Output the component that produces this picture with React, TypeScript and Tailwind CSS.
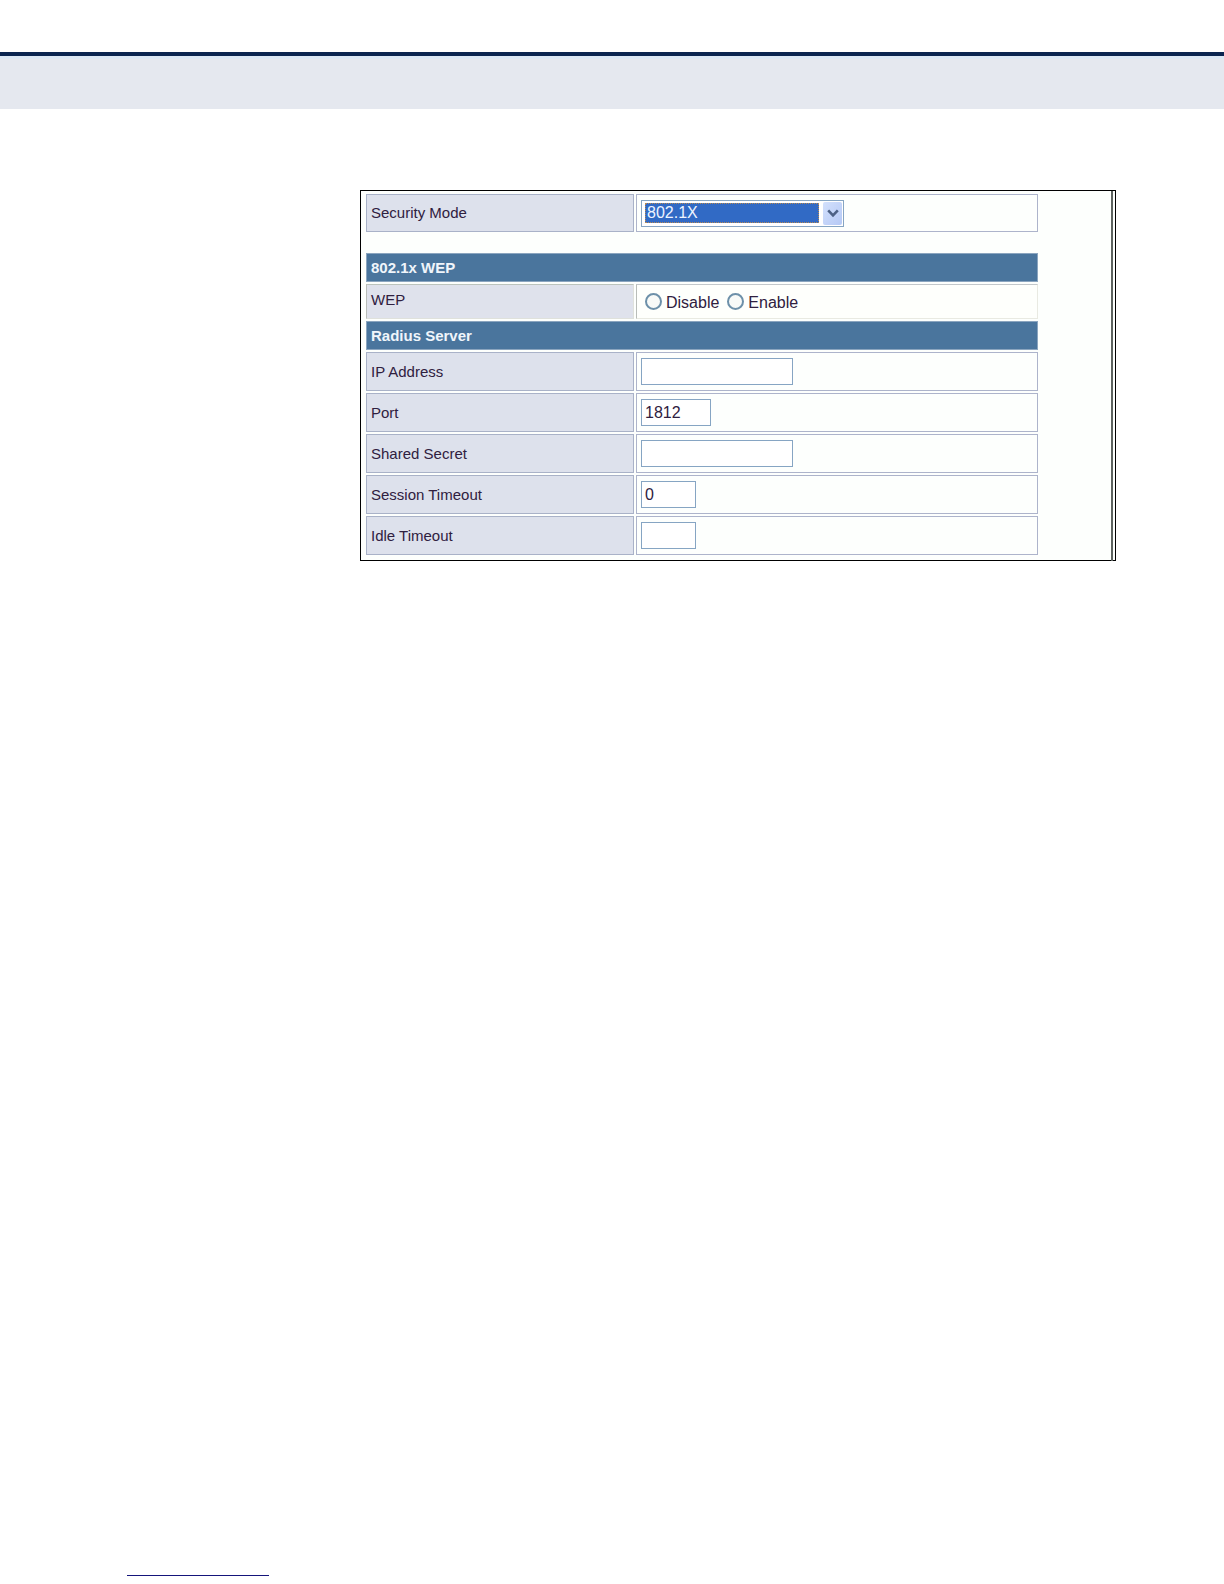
import { useState } from "react";
import type { ReactNode } from "react";

const labelCell =
  "border border-[#a9b2c8] bg-[#dde1ec] pl-1 text-left align-middle font-normal";
const valueCell = "border border-[#adb4cb] bg-[#fdfffd] pl-1 align-middle";
const textInput =
  "block h-[27px] border border-[#86a5c3] bg-white px-[3px] text-[16px] leading-5 outline-none";

function HeadingRow({ children }: { children: ReactNode }) {
  return (
    <tr className="h-[29px]">
      <th
        colSpan={2}
        scope="colgroup"
        className="border border-[#8ba5bf] bg-[#4a759d] pl-1 text-left align-middle font-bold text-[#f0f5fb]"
      >
        {children}
      </th>
    </tr>
  );
}

type FieldProps = {
  id: string;
  label: string;
  width: string;
  initial?: string;
  type?: string;
};

function FieldRow({ id, label, width, initial = "", type = "text" }: FieldProps) {
  const [value, setValue] = useState(initial);
  return (
    <tr className="h-[39px]">
      <th scope="row" className={labelCell}>
        <label htmlFor={id}>{label}</label>
      </th>
      <td className={valueCell}>
        <input
          id={id}
          type={type}
          value={value}
          onChange={(e) => setValue(e.target.value)}
          className={`${textInput} ${width}`}
        />
      </td>
    </tr>
  );
}

function WepOption({ id, label }: { id: string; label: string }) {
  return (
    <span className="flex items-center gap-1">
      <input
        id={id}
        type="radio"
        name="wep"
        className="size-[17px] appearance-none rounded-full border-2 border-[#6d90a9] bg-[#f8faf8] checked:bg-[#3fa535]"
      />
      <label htmlFor={id} className="pt-0.5 text-[16px]">
        {label}
      </label>
    </span>
  );
}

export default function App() {
  const [mode, setMode] = useState("802.1X");
  return (
    <div className="flex min-h-screen flex-col bg-white font-['Liberation_Sans',Arial,sans-serif] text-[15px] leading-5 text-[#2f2040]">
      <header className="mt-13 border-t-4 border-[#0a2550] bg-[#e5e8ef]">
        <div className="h-[3px] bg-[#dce8f5]" />
        <div className="h-[50px]" />
      </header>

      <main className="mt-[81px] mr-[108px] ml-[360px] border border-black bg-[#fdfffd] pr-0.5">
        <div className="-mb-px border-r-2 border-[#5d6360] pt-px pr-[71px] pb-1 pl-[3px]">
          <table className="w-full table-fixed border-separate border-spacing-0.5">
            <colgroup>
              <col className="w-[40%]" />
              <col />
            </colgroup>
            <tbody>
              <tr className="h-[38px]">
                <th scope="row" className={labelCell}>
                  <label htmlFor="security-mode">Security Mode</label>
                </th>
                <td className={valueCell}>
                  <div className="flex h-[27px] w-[203px] items-center gap-1 border border-[#86a5c3] bg-white pr-px pl-[3px]">
                    <select
                      id="security-mode"
                      value={mode}
                      onChange={(e) => setMode(e.target.value)}
                      className="h-5 min-w-0 flex-1 appearance-none border border-dotted border-[#b58a55] bg-[#316ac5] pl-px text-[16px] leading-[18px] text-[#eef4ff] outline-none"
                    >
                      <option>802.1X</option>
                    </select>
                    <span className="pointer-events-none flex h-[23px] w-[19px] items-center justify-center rounded-xs bg-linear-to-br from-[#d3e0fc] to-[#b5c9f5]">
                      <svg
                        width="12"
                        height="9"
                        viewBox="0 0 12 9"
                        fill="none"
                        stroke="#4d6185"
                        strokeWidth="2.6"
                        aria-hidden="true"
                      >
                        <path d="M1.2 1.3 6 6.3 10.8 1.3" />
                      </svg>
                    </span>
                  </div>
                </td>
              </tr>
              <tr className="h-[17px]">
                <td colSpan={2} />
              </tr>
              <HeadingRow>802.1x WEP</HeadingRow>
              <tr className="h-[35px]">
                <th
                  scope="row"
                  className="border border-[#dfe1dc] border-t-[#bcc4bd] border-l-[#b9bdb9] bg-[#dfe2ec] pb-1 pl-1 text-left align-middle font-normal"
                >
                  WEP
                </th>
                <td className="border border-[#e9eae2] border-t-[#c3c8cb] border-l-[#b9bdb9] bg-[#fefffc] pl-2 align-middle">
                  <div className="flex gap-2" role="radiogroup" aria-label="WEP">
                    <WepOption id="wep-disable" label="Disable" />
                    <WepOption id="wep-enable" label="Enable" />
                  </div>
                </td>
              </tr>
              <HeadingRow>Radius Server</HeadingRow>
              <FieldRow id="ip-address" label="IP Address" width="w-[152px]" />
              <FieldRow id="port" label="Port" width="w-[70px]" initial="1812" />
              <FieldRow
                id="shared-secret"
                label="Shared Secret"
                width="w-[152px]"
                type="password"
              />
              <FieldRow
                id="session-timeout"
                label="Session Timeout"
                width="w-[55px]"
                initial="0"
              />
              <FieldRow id="idle-timeout" label="Idle Timeout" width="w-[55px]" />
            </tbody>
          </table>
        </div>
      </main>

      <footer className="mt-auto mb-2 ml-[127px]">
        <div className="h-px w-[142px] bg-[#15157b]" />
      </footer>
    </div>
  );
}
